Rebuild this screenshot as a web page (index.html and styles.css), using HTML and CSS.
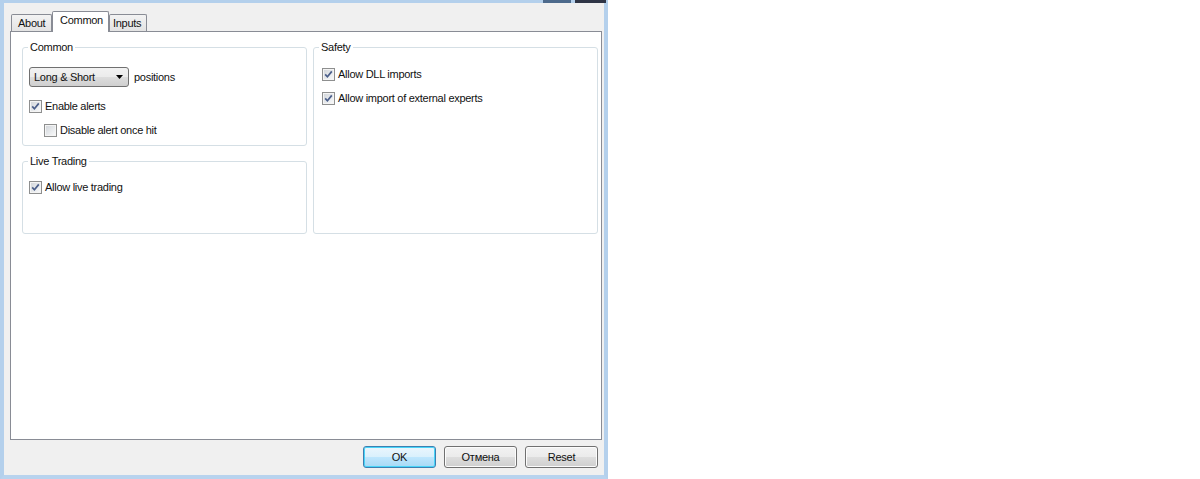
FILE: index.html
```html
<!DOCTYPE html>
<html>
<head>
<meta charset="utf-8">
<title>Expert properties</title>
<link rel="stylesheet" href="styles.css">
</head>
<body>
<div class="window">
  <div class="caption">
    <span class="cap-spacer"></span>
    <span class="cap-btn cap-max"></span>
    <span class="cap-btn cap-close"></span>
  </div>
  <div class="client">
    <div class="tabs">
      <div class="tab tab-about">About</div>
      <div class="tab tab-common active">Common</div>
      <div class="tab tab-inputs">Inputs</div>
    </div>
    <div class="panel">
      <div class="cols">
        <div class="col">
          <fieldset class="group">
            <legend>Common</legend>
            <div class="gbody gbody-common">
              <div class="combo-row">
                <div class="combo">
                  <span class="combo-text">Long &amp; Short</span>
                  <svg class="combo-arrow" width="7" height="4" viewBox="0 0 7 4"><path d="M0 0H7L3.5 4Z" fill="#000"/></svg>
                </div>
                <span class="combo-after">positions</span>
              </div>
              <label class="check">
                <span class="box"><svg width="9" height="9" viewBox="0 0 9 9"><path d="M1.2 4.4L3.4 6.8L7.8 1.4" fill="none" stroke="#4a5e8a" stroke-width="1.7"/></svg></span>
                <span>Enable alerts</span>
              </label>
              <label class="check indent">
                <span class="box"></span>
                <span>Disable alert once hit</span>
              </label>
            </div>
          </fieldset>
          <fieldset class="group group-live">
            <legend>Live Trading</legend>
            <div class="gbody gbody-live">
              <label class="check">
                <span class="box"><svg width="9" height="9" viewBox="0 0 9 9"><path d="M1.2 4.4L3.4 6.8L7.8 1.4" fill="none" stroke="#4a5e8a" stroke-width="1.7"/></svg></span>
                <span>Allow live trading</span>
              </label>
            </div>
          </fieldset>
        </div>
        <fieldset class="group group-safety">
          <legend>Safety</legend>
          <div class="gbody gbody-safety">
            <label class="check">
              <span class="box"><svg width="9" height="9" viewBox="0 0 9 9"><path d="M1.2 4.4L3.4 6.8L7.8 1.4" fill="none" stroke="#4a5e8a" stroke-width="1.7"/></svg></span>
              <span>Allow DLL imports</span>
            </label>
            <label class="check">
              <span class="box"><svg width="9" height="9" viewBox="0 0 9 9"><path d="M1.2 4.4L3.4 6.8L7.8 1.4" fill="none" stroke="#4a5e8a" stroke-width="1.7"/></svg></span>
              <span>Allow import of external experts</span>
            </label>
          </div>
        </fieldset>
      </div>
    </div>
    <div class="buttons">
      <div class="btn btn-default">OK</div>
      <div class="btn">Отмена</div>
      <div class="btn">Reset</div>
    </div>
  </div>
</div>
</body>
</html>
```

FILE: styles.css
```css
html, body {
  margin: 0;
  padding: 0;
  background: #ffffff;
}

body {
  font-family: "Liberation Sans", Arial, sans-serif;
  font-size: 11px;
  letter-spacing: -0.28px;
  color: #111;
}

.window {
  width: 608px;
  height: 479px;
  box-sizing: border-box;
  border-left: 4px solid #b4d0ec;
  border-right: 4px solid #b4d0ec;
  border-bottom: 4px solid #b8d3ee;
  background: #f0f0f0;
  display: flex;
  flex-direction: column;
}

.caption {
  height: 3px;
  margin: 0 -4px;
  background: #b4d0ec;
  display: flex;
  flex: none;
}

.cap-spacer {
  flex: 0 0 543px;
}

.cap-btn {
  display: block;
  height: 3px;
}

.cap-max {
  width: 28px;
  background: #4d6a8c;
  margin-right: 4px;
}

.cap-close {
  width: 31px;
  background: #2f3546;
}

.client {
  flex: 1;
  padding: 8px 2px 0 6px;
  display: flex;
  flex-direction: column;
}

.tabs {
  display: flex;
  align-items: flex-end;
  height: 20px;
  padding-left: 1px;
  flex: none;
}

.tab {
  box-sizing: border-box;
  height: 17px;
  border: 1px solid #898c95;
  border-bottom: none;
  border-radius: 2px 2px 0 0;
  background: linear-gradient(#f3f3f3, #e3e3e3);
  line-height: 15px;
  padding-top: 1px;
  white-space: nowrap;
}

.tab-about {
  width: 41px;
  padding-left: 6px;
}

.tab-common {
  width: 57px;
  padding-left: 7px;
}

.tab-inputs {
  width: 38px;
  padding-left: 3px;
}

.tab.active {
  height: 21px;
  margin-bottom: -1px;
  background: #ffffff;
  position: relative;
  z-index: 1;
  padding-top: 1px;
}

.panel {
  box-sizing: border-box;
  height: 409px;
  border: 1px solid #898c95;
  background: #ffffff;
  padding: 9px 3px 0 11px;
  flex: none;
}

.cols {
  display: flex;
  gap: 6px;
  align-items: stretch;
}

.col {
  display: flex;
  flex-direction: column;
  gap: 9px;
}

.group {
  margin: 0;
  padding: 0;
  width: 285px;
  box-sizing: border-box;
  border: 1px solid #d5dfe5;
  border-radius: 3px;
  min-width: 0;
}

.group legend {
  margin-left: 5px;
  padding: 0 2px;
  line-height: 13px;
}

.gbody {
  box-sizing: border-box;
  display: flex;
  flex-direction: column;
  align-items: flex-start;
}

.gbody-common {
  height: 91px;
  padding: 13px 0 0 6px;
  gap: 11px;
}

.gbody-common .combo-row {
  margin-bottom: 2px;
}

.gbody-live {
  height: 65px;
  padding: 13px 0 0 6px;
}

.gbody-safety {
  padding: 14px 0 0 8px;
  gap: 11px;
}

.combo-row {
  display: flex;
  align-items: center;
  gap: 5px;
}

.combo {
  box-sizing: border-box;
  width: 100px;
  height: 20px;
  border: 1px solid #707070;
  border-radius: 3px;
  background: linear-gradient(#f2f2f2 0%, #ebebeb 50%, #dddddd 51%, #cfcfcf 100%);
  display: flex;
  align-items: center;
  justify-content: space-between;
  padding: 0 5px 0 4px;
}

.combo-text {
  line-height: 14px;
}

.combo-arrow {
  display: block;
}

.check {
  display: flex;
  align-items: center;
  gap: 3px;
  height: 13px;
  line-height: 13px;
  white-space: nowrap;
}

.check.indent {
  margin-left: 15px;
}

.box {
  box-sizing: border-box;
  width: 13px;
  height: 13px;
  border: 1px solid #8e8f8f;
  background: linear-gradient(135deg, #cfd3d8 0%, #eef0f2 70%, #fbfbfb 100%);
  box-shadow: inset 0 0 0 1px #f4f4f4;
  display: flex;
  align-items: center;
  justify-content: center;
  flex: none;
}

.box svg {
  display: block;
}

.buttons {
  display: flex;
  justify-content: flex-end;
  gap: 8px;
  margin-top: 6px;
  padding-right: 4px;
  flex: none;
}

.btn {
  box-sizing: border-box;
  width: 73px;
  height: 22px;
  border: 1px solid #707070;
  border-radius: 3px;
  background: linear-gradient(#f2f2f2 0%, #ebebeb 50%, #dddddd 51%, #cfcfcf 100%);
  box-shadow: inset 0 0 0 1px #fcfcfc;
  text-align: center;
  line-height: 20px;
}

.btn-default {
  border-color: #3c7fb1;
  background: linear-gradient(#eaf6fd 0%, #d9f0fc 50%, #bee6fd 51%, #a7d9f5 100%);
  box-shadow: inset 0 0 0 1px #48d4f8;
}
```
